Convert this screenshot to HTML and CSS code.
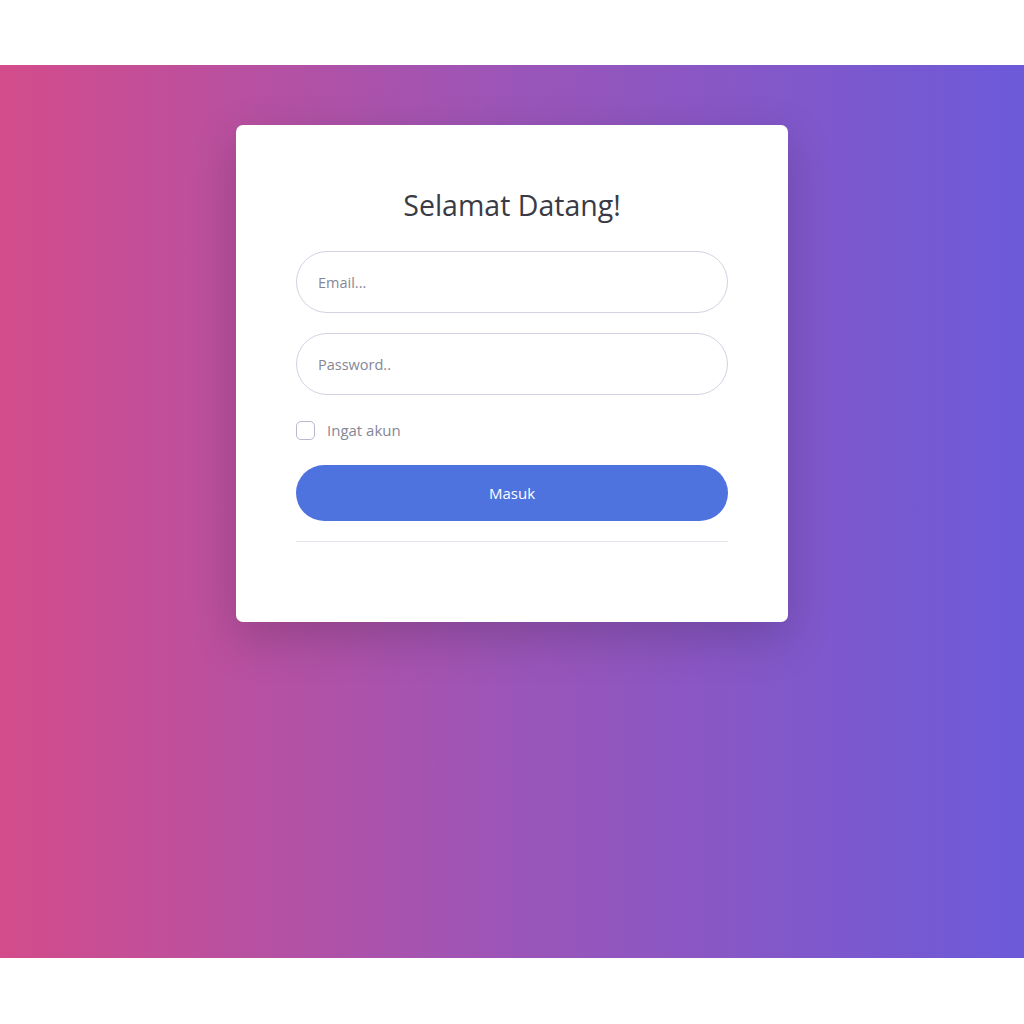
FILE: index.html
```html
<!DOCTYPE html>
<html lang="id">
<head>
<meta charset="utf-8">
<title>Login</title>
<link rel="stylesheet" href="styles.css">
</head>
<body>
<div class="top-space"></div>
<section class="bg">
  <div class="card">
    <h1 class="title">Selamat Datang!</h1>
    <form class="form">
      <input class="field" type="email" placeholder="Email...">
      <input class="field" type="password" placeholder="Password..">
      <label class="remember">
        <span class="check"></span>
        <span class="remember-text">Ingat akun</span>
      </label>
      <button class="btn" type="button">Masuk</button>
      <hr class="divider">
    </form>
  </div>
</section>
</body>
</html>
```
FILE: styles.css
```css
* { box-sizing: border-box; }
html, body { margin: 0; padding: 0; background: #fff; }
body { font-family: "Open Sans", "Noto Sans", "Liberation Sans", sans-serif; }
.top-space { height: 65px; }
.bg {
  height: 893px;
  background: linear-gradient(to right, #d34c8b 0%, #9b55b8 50%, #6c5ad9 100%);
  display: flex;
  justify-content: center;
  align-items: flex-start;
  padding-top: 60px;
}
.card {
  width: 552px;
  height: 497px;
  background: #fff;
  border-radius: 7px;
  box-shadow: 0 1rem 3rem rgba(0, 0, 0, 0.18);
  padding: 63px 60px 0;
}
.title {
  margin: 0 0 29px;
  font-weight: 400;
  font-size: 28.5px;
  line-height: 34px;
  text-align: center;
  color: #3a3b45;
}
.form { display: flex; flex-direction: column; }
.field {
  height: 62px;
  width: 100%;
  border: 1px solid #d1d3e2;
  border-radius: 31px;
  padding: 0 21px;
  font-family: inherit;
  font-size: 14.5px;
  color: #6e707e;
  background: #fff;
  outline: none;
}
.field + .field { margin-top: 20px; }
.field::placeholder { color: #858796; }
.remember {
  margin-top: 23px;
  height: 24px;
  display: flex;
  align-items: center;
  gap: 12px;
}
.check {
  width: 19px;
  height: 19px;
  border: 1px solid #b7b9cc;
  border-radius: 5px;
  background: #fff;
}
.remember-text {
  font-size: 15px;
  color: #858796;
}
.btn {
  margin-top: 23px;
  height: 56px;
  width: 100%;
  border: none;
  border-radius: 28px;
  background: #4e73df;
  color: #fff;
  font-family: inherit;
  font-size: 15px;
}
.divider {
  margin: 20px 0 0;
  border: 0;
  border-top: 1px solid #e3e6f0;
  height: 0;
}
```
